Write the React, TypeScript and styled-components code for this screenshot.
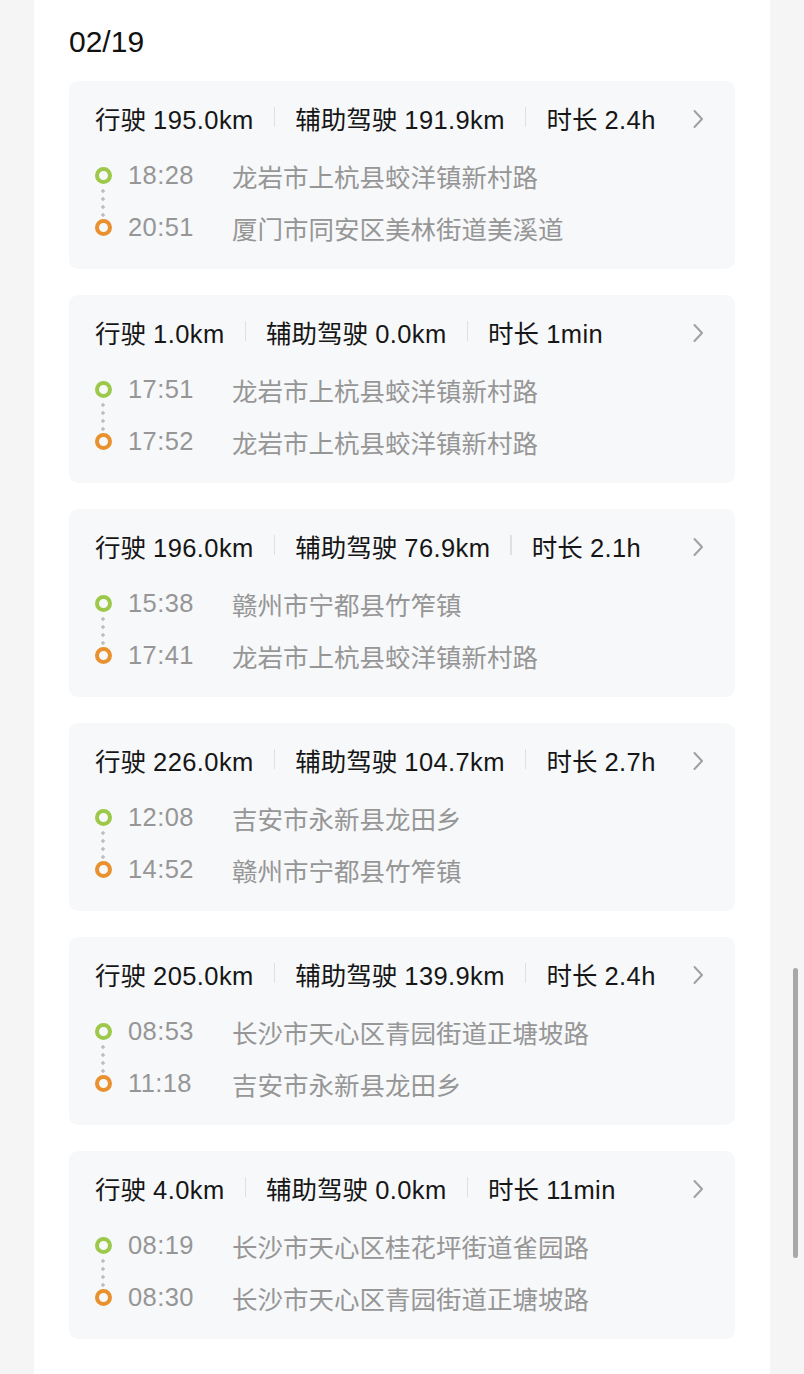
import React from 'react';
import styled, { createGlobalStyle } from 'styled-components';

const GlobalStyle = createGlobalStyle`
    html, body {
        margin: 0;
        padding: 0;
        background-color: rgb(245, 245, 245);
    }
    body {
        font-family: 'Liberation Sans', 'Noto Sans CJK SC', sans-serif;
        -webkit-font-smoothing: antialiased;
    }
`;

type TTrip = {
    distance: string;
    assisted: string;
    duration: string;
    start: { time: string; place: string };
    end: { time: string; place: string };
};

const trips: TTrip[] = [
    {
        distance: '195.0km',
        assisted: '191.9km',
        duration: '2.4h',
        start: { time: '18:28', place: '龙岩市上杭县蛟洋镇新村路' },
        end: { time: '20:51', place: '厦门市同安区美林街道美溪道' },
    },
    {
        distance: '1.0km',
        assisted: '0.0km',
        duration: '1min',
        start: { time: '17:51', place: '龙岩市上杭县蛟洋镇新村路' },
        end: { time: '17:52', place: '龙岩市上杭县蛟洋镇新村路' },
    },
    {
        distance: '196.0km',
        assisted: '76.9km',
        duration: '2.1h',
        start: { time: '15:38', place: '赣州市宁都县竹笮镇' },
        end: { time: '17:41', place: '龙岩市上杭县蛟洋镇新村路' },
    },
    {
        distance: '226.0km',
        assisted: '104.7km',
        duration: '2.7h',
        start: { time: '12:08', place: '吉安市永新县龙田乡' },
        end: { time: '14:52', place: '赣州市宁都县竹笮镇' },
    },
    {
        distance: '205.0km',
        assisted: '139.9km',
        duration: '2.4h',
        start: { time: '08:53', place: '长沙市天心区青园街道正塘坡路' },
        end: { time: '11:18', place: '吉安市永新县龙田乡' },
    },
    {
        distance: '4.0km',
        assisted: '0.0km',
        duration: '11min',
        start: { time: '08:19', place: '长沙市天心区桂花坪街道雀园路' },
        end: { time: '08:30', place: '长沙市天心区青园街道正塘坡路' },
    },
];

const Panel = styled.div`
    margin: 0 34px;
    padding: 0 35px;
    min-height: 1374px;
    box-sizing: border-box;
    background-color: rgb(255, 255, 255);
`;

const DateTitle = styled.div`
    padding-top: 22px;
    margin-bottom: 19px;
    font-size: 30px;
    line-height: 40px;
    color: rgb(17, 17, 17);
`;

const List = styled.div`
    display: flex;
    flex-direction: column;
    gap: 26px;
`;

const Card = styled.div`
    background-color: rgb(247, 248, 250);
    border-radius: 9px;
    padding: 18px 26px 16px 26px;
    height: 188px;
    box-sizing: border-box;
`;

const Num = styled.span`
    letter-spacing: 0.4px;
`;

const Header = styled.div`
    display: flex;
    align-items: center;
    height: 36px;
    font-size: 25.5px;
    color: rgb(22, 22, 22);
    .divider {
        width: 1.5px;
        height: 20px;
        margin: 0 20px;
        background-color: rgb(222, 224, 228);
    }
    .chevron {
        margin-left: auto;
        margin-right: 5px;
        margin-top: 4px;
        display: flex;
    }
`;

const Route = styled.div`
    margin-top: 14px;
    display: flex;
    flex-direction: column;
`;

const Stop = styled.div`
    display: flex;
    align-items: center;
    height: 52px;
    font-size: 25.5px;
    color: rgb(150, 150, 150);
    .time {
        width: 104px;
        flex-shrink: 0;
    }
`;

const Marker = styled.div<{ $color: string; $line: 'down' | 'up' }>`
    position: relative;
    width: 17px;
    height: 17px;
    margin-left: -0.5px;
    margin-right: 16.5px;
    flex-shrink: 0;
    box-sizing: border-box;
    border-radius: 50%;
    border: 4px solid ${(p) => p.$color};
    &::after {
        content: '';
        display: ${(p) => (p.$line === 'down' ? 'block' : 'none')};
        position: absolute;
        left: 50%;
        top: 14px;
        width: 4px;
        height: 33px;
        margin-left: -2px;
        background-image: radial-gradient(circle, rgb(188, 190, 194) 1.5px, transparent 1.8px);
        background-size: 4px 8px;
        background-position: 0 2px;
    }
`;

const ScrollThumb = styled.div`
    position: fixed;
    left: 793px;
    top: 968px;
    width: 5px;
    height: 290px;
    border-radius: 3px;
    background-color: rgb(168, 168, 168);
`;

const Chevron = () => (
    <svg width="12" height="22" viewBox="0 0 12 22" fill="none">
        <path d="M2.5 3 L10 11 L2.5 19" stroke="rgb(160, 160, 160)" strokeWidth="2" strokeLinecap="round" strokeLinejoin="round" />
    </svg>
);

const TripCard = ({ trip }: { trip: TTrip }) => (
    <Card>
        <Header>
            <span>
                行驶 <Num>{trip.distance}</Num>
            </span>
            <span className="divider" />
            <span>
                辅助驾驶 <Num>{trip.assisted}</Num>
            </span>
            <span className="divider" />
            <span>
                时长 <Num>{trip.duration}</Num>
            </span>
            <span className="chevron">
                <Chevron />
            </span>
        </Header>
        <Route>
            <Stop>
                <Marker $color="rgb(157, 201, 74)" $line="down" />
                <Num className="time">{trip.start.time}</Num>
                <span>{trip.start.place}</span>
            </Stop>
            <Stop>
                <Marker $color="rgb(232, 145, 46)" $line="up" />
                <Num className="time">{trip.end.time}</Num>
                <span>{trip.end.place}</span>
            </Stop>
        </Route>
    </Card>
);

const App = () => {
    return (
        <>
            <GlobalStyle />
            <Panel>
                <DateTitle>02/19</DateTitle>
                <List>
                    {trips.map((trip, i) => (
                        <TripCard key={i} trip={trip} />
                    ))}
                </List>
            </Panel>
            <ScrollThumb />
        </>
    );
};

export default App;
